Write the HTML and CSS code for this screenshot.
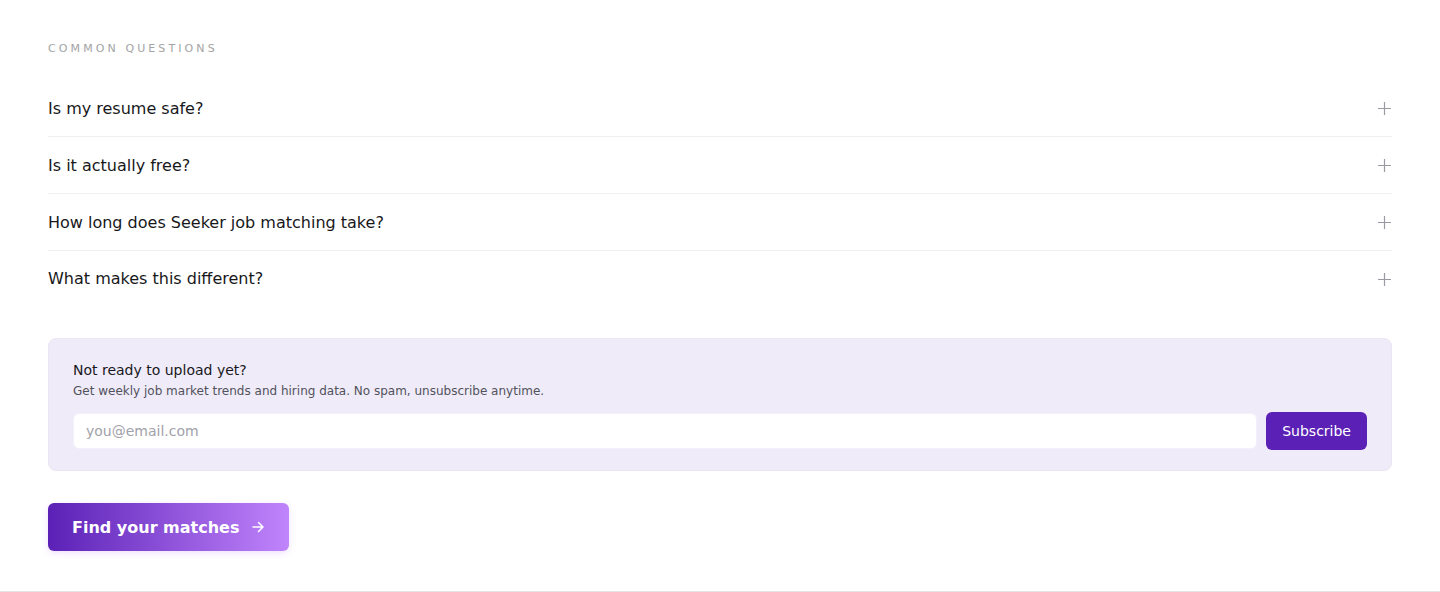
FILE: index.html
```html
<!DOCTYPE html>
<html lang="en">
<head>
<meta charset="utf-8">
<title>Common questions</title>
<link rel="stylesheet" href="styles.css">
</head>
<body>
<section class="faq-section">
  <h2 class="eyebrow">Common questions</h2>
  <ul class="faq-list">
    <li class="faq-item"><span>Is my resume safe?</span><span class="plus" aria-hidden="true"><svg width="13" height="13" viewBox="0 0 13 13"><path d="M6.5 0v13M0 6.5h13" stroke="currentColor" stroke-width="1.2"/></svg></span></li>
    <li class="faq-item"><span>Is it actually free?</span><span class="plus" aria-hidden="true"><svg width="13" height="13" viewBox="0 0 13 13"><path d="M6.5 0v13M0 6.5h13" stroke="currentColor" stroke-width="1.2"/></svg></span></li>
    <li class="faq-item"><span>How long does Seeker job matching take?</span><span class="plus" aria-hidden="true"><svg width="13" height="13" viewBox="0 0 13 13"><path d="M6.5 0v13M0 6.5h13" stroke="currentColor" stroke-width="1.2"/></svg></span></li>
    <li class="faq-item"><span>What makes this different?</span><span class="plus" aria-hidden="true"><svg width="13" height="13" viewBox="0 0 13 13"><path d="M6.5 0v13M0 6.5h13" stroke="currentColor" stroke-width="1.2"/></svg></span></li>
  </ul>

  <div class="newsletter">
    <p class="nl-title">Not ready to upload yet?</p>
    <p class="nl-sub">Get weekly job market trends and hiring data. No spam, unsubscribe anytime.</p>
    <form class="nl-form">
      <input class="nl-input" type="email" placeholder="you@email.com">
      <button class="nl-btn" type="button">Subscribe</button>
    </form>
  </div>

  <a class="cta" href="#">Find your matches <svg width="14" height="14" viewBox="0 0 14 14" aria-hidden="true"><path d="M2 7h10M7.5 2.5L12 7l-4.5 4.5" fill="none" stroke="currentColor" stroke-width="1.5" stroke-linecap="round" stroke-linejoin="round"/></svg></a>
</section>
</body>
</html>
```
FILE: styles.css
```css
* { box-sizing: border-box; }

body {
  margin: 0;
  background: #fff;
  font-family: "DejaVu Sans", sans-serif;
  color: #111;
}

.faq-section {
  padding: 41px 48px 40px;
  border-bottom: 1px solid #e4e4e7;
  display: flex;
  flex-direction: column;
  align-items: flex-start;
}

.eyebrow {
  margin: 0;
  font-size: 11px;
  line-height: 16px;
  font-weight: 400;
  letter-spacing: 3.1px;
  text-transform: uppercase;
  color: #a3a3a3;
}

.faq-list {
  list-style: none;
  margin: 23px 0 0;
  padding: 0;
  width: 100%;
}

.faq-item {
  display: flex;
  justify-content: space-between;
  align-items: center;
  height: 57px;
  font-size: 16px;
  color: #18181b;
  border-bottom: 1px solid #f0f0f2;
}

.faq-item:last-child { border-bottom: none; height: 55px; }

.plus {
  display: flex;
  color: #9a9aa2;
  margin-right: 1px;
  margin-top: 1px;
}

.newsletter {
  margin-top: 32px;
  width: 100%;
  background: #efebf9;
  border: 1px solid #ebe6f5;
  border-radius: 8px;
  padding: 21px 24px 20px;
}

.nl-title {
  margin: 0;
  font-size: 14px;
  line-height: 20px;
  color: #18181b;
}

.nl-sub {
  margin: 2px 0 0;
  font-size: 12px;
  line-height: 18px;
  color: #52525b;
}

.nl-form {
  display: flex;
  align-items: center;
  gap: 9px;
  margin-top: 12px;
}

.nl-input {
  flex: 1;
  height: 36px;
  border: 1px solid #f3f0fa;
  border-radius: 6px;
  background: #fff;
  padding: 0 12px;
  font-family: inherit;
  font-size: 14px;
  color: #18181b;
}

.nl-input::placeholder { color: #a1a1aa; }

.nl-btn {
  height: 38px;
  padding: 0 16px;
  border: none;
  border-radius: 6px;
  background: #5b21b6;
  color: #fff;
  font-family: inherit;
  font-size: 14px;
}

.cta {
  margin-top: 32px;
  display: inline-flex;
  align-items: center;
  gap: 12px;
  height: 48px;
  padding: 0 24px;
  border-radius: 6px;
  background: linear-gradient(90deg, #5b21b6 0%, #c084fc 100%);
  box-shadow: 0 2px 6px rgba(192, 132, 252, 0.25);
  color: #fff;
  text-decoration: none;
  font-size: 16px;
  font-weight: 700;
}
```
